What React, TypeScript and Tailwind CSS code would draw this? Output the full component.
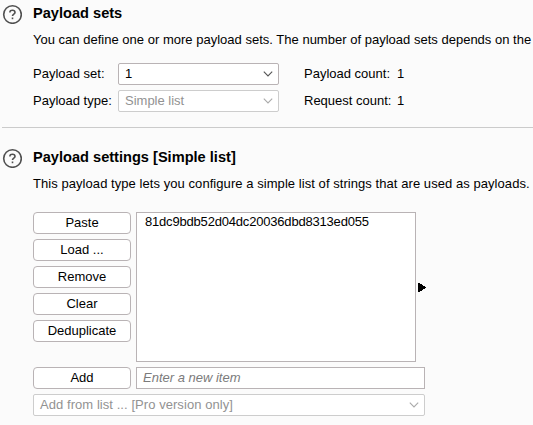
import React from 'react';

function Help() {
  return (
    <svg className="block size-[20px] shrink-0" viewBox="0 0 20 20" fill="none" stroke="#505050" strokeWidth="1.6">
      <circle cx="10.5" cy="10.5" r="8.8" />
      <path d="M7.9 8.4C7.9 6.9 9 6.2 10.4 6.2s2.6.8 2.6 2.2c0 1.8-2.5 1.7-2.5 3.6" />
      <path d="M10.5 13.5v1.7" />
    </svg>
  );
}

function Chevron({ color }: { color: string }) {
  return (
    <svg className="block h-[6px] w-[10px]" viewBox="0 0 10 6" fill="none" stroke={color} strokeWidth="1.1">
      <path d="M0.8 0.7L5 4.9L9.2 0.7" />
    </svg>
  );
}

const buttons = ['Paste', 'Load ...', 'Remove', 'Clear', 'Deduplicate'];
const buttonClass = 'flex h-[22px] w-[98px] items-center justify-center rounded-[4px] border border-[#b9b3b5] bg-white';

export default function App() {
  return (
    <main className="h-[425px] w-[533px] overflow-hidden bg-[#fbfbfb] font-['Liberation_Sans',Arial,sans-serif] text-[13px] leading-[16px] whitespace-nowrap text-black">
      <section className="flex h-[127px] gap-[11px] pt-[4px] pl-[2px]">
        <Help />
        <div className="pt-px">
          <h2 className="text-[14.6px] leading-[16px] font-bold">Payload sets</h2>
          <p className="mt-[11px] tracking-[0.012px]">You can define one or more payload sets. The number of payload sets depends on the</p>
          <div className="mt-[15px] grid grid-cols-[85px_186px_93px_auto] grid-rows-[22px_22px] items-center gap-y-[5px]">
            <span>Payload set:</span>
            <div className="flex h-[22px] w-[161px] items-center justify-between rounded-[2px] border border-[#b9b3b5] bg-white pr-[5px] pl-[6px]">1<Chevron color="#555" /></div>
            <span>Payload count:</span>
            <span>1</span>
            <span>Payload type:</span>
            <div className="flex h-[22px] w-[161px] items-center justify-between rounded-[2px] border border-[#cdcdcd] bg-white pr-[5px] pl-[6px] text-[#929292]">Simple list<Chevron color="#aaa" /></div>
            <span>Request count:</span>
            <span>1</span>
          </div>
        </div>
      </section>
      <hr className="ml-[2px] border-[#cbcbcb]" />
      <section className="flex gap-[11px] pt-[20px] pl-[2px]">
        <Help />
        <div className="pt-px">
          <h2 className="text-[14.6px] leading-[16px] font-bold">Payload settings [Simple list]</h2>
          <p className="mt-[11px] tracking-[0.06px]">This payload type lets you configure a simple list of strings that are used as payloads.</p>
          <div className="mt-[20px] flex">
            <div className="flex flex-col gap-[5px]">
              {buttons.map((label) => <button key={label} className={buttonClass}>{label}</button>)}
            </div>
            <div className="ml-[5px] h-[150px] w-[280px] border border-[#b9b3b5] bg-white pt-px pl-[8px] tracking-[-0.19px]">81dc9bdb52d04dc20036dbd8313ed055</div>
            <svg className="mt-[71px] ml-[2px] h-[9px] w-[8px]" viewBox="0 0 8 9" shapeRendering="crispEdges"><path d="M0 0H1L8 4V5L1 9H0Z" /></svg>
          </div>
          <div className="mt-[5px] flex gap-[5px]">
            <button className={buttonClass}>Add</button>
            <div className="flex h-[22px] w-[289px] items-center border border-[#b9b3b5] bg-white pl-[6px] text-[#7b7b7b] italic">Enter a new item</div>
          </div>
          <div className="mt-[5px] flex h-[22px] w-[392px] items-center justify-between rounded-[2px] border border-[#cdcdcd] bg-white pr-[5px] pl-[6px] tracking-[0.06px] text-[#929292]">Add from list ... [Pro version only]<Chevron color="#aaa" /></div>
        </div>
      </section>
    </main>
  );
}
